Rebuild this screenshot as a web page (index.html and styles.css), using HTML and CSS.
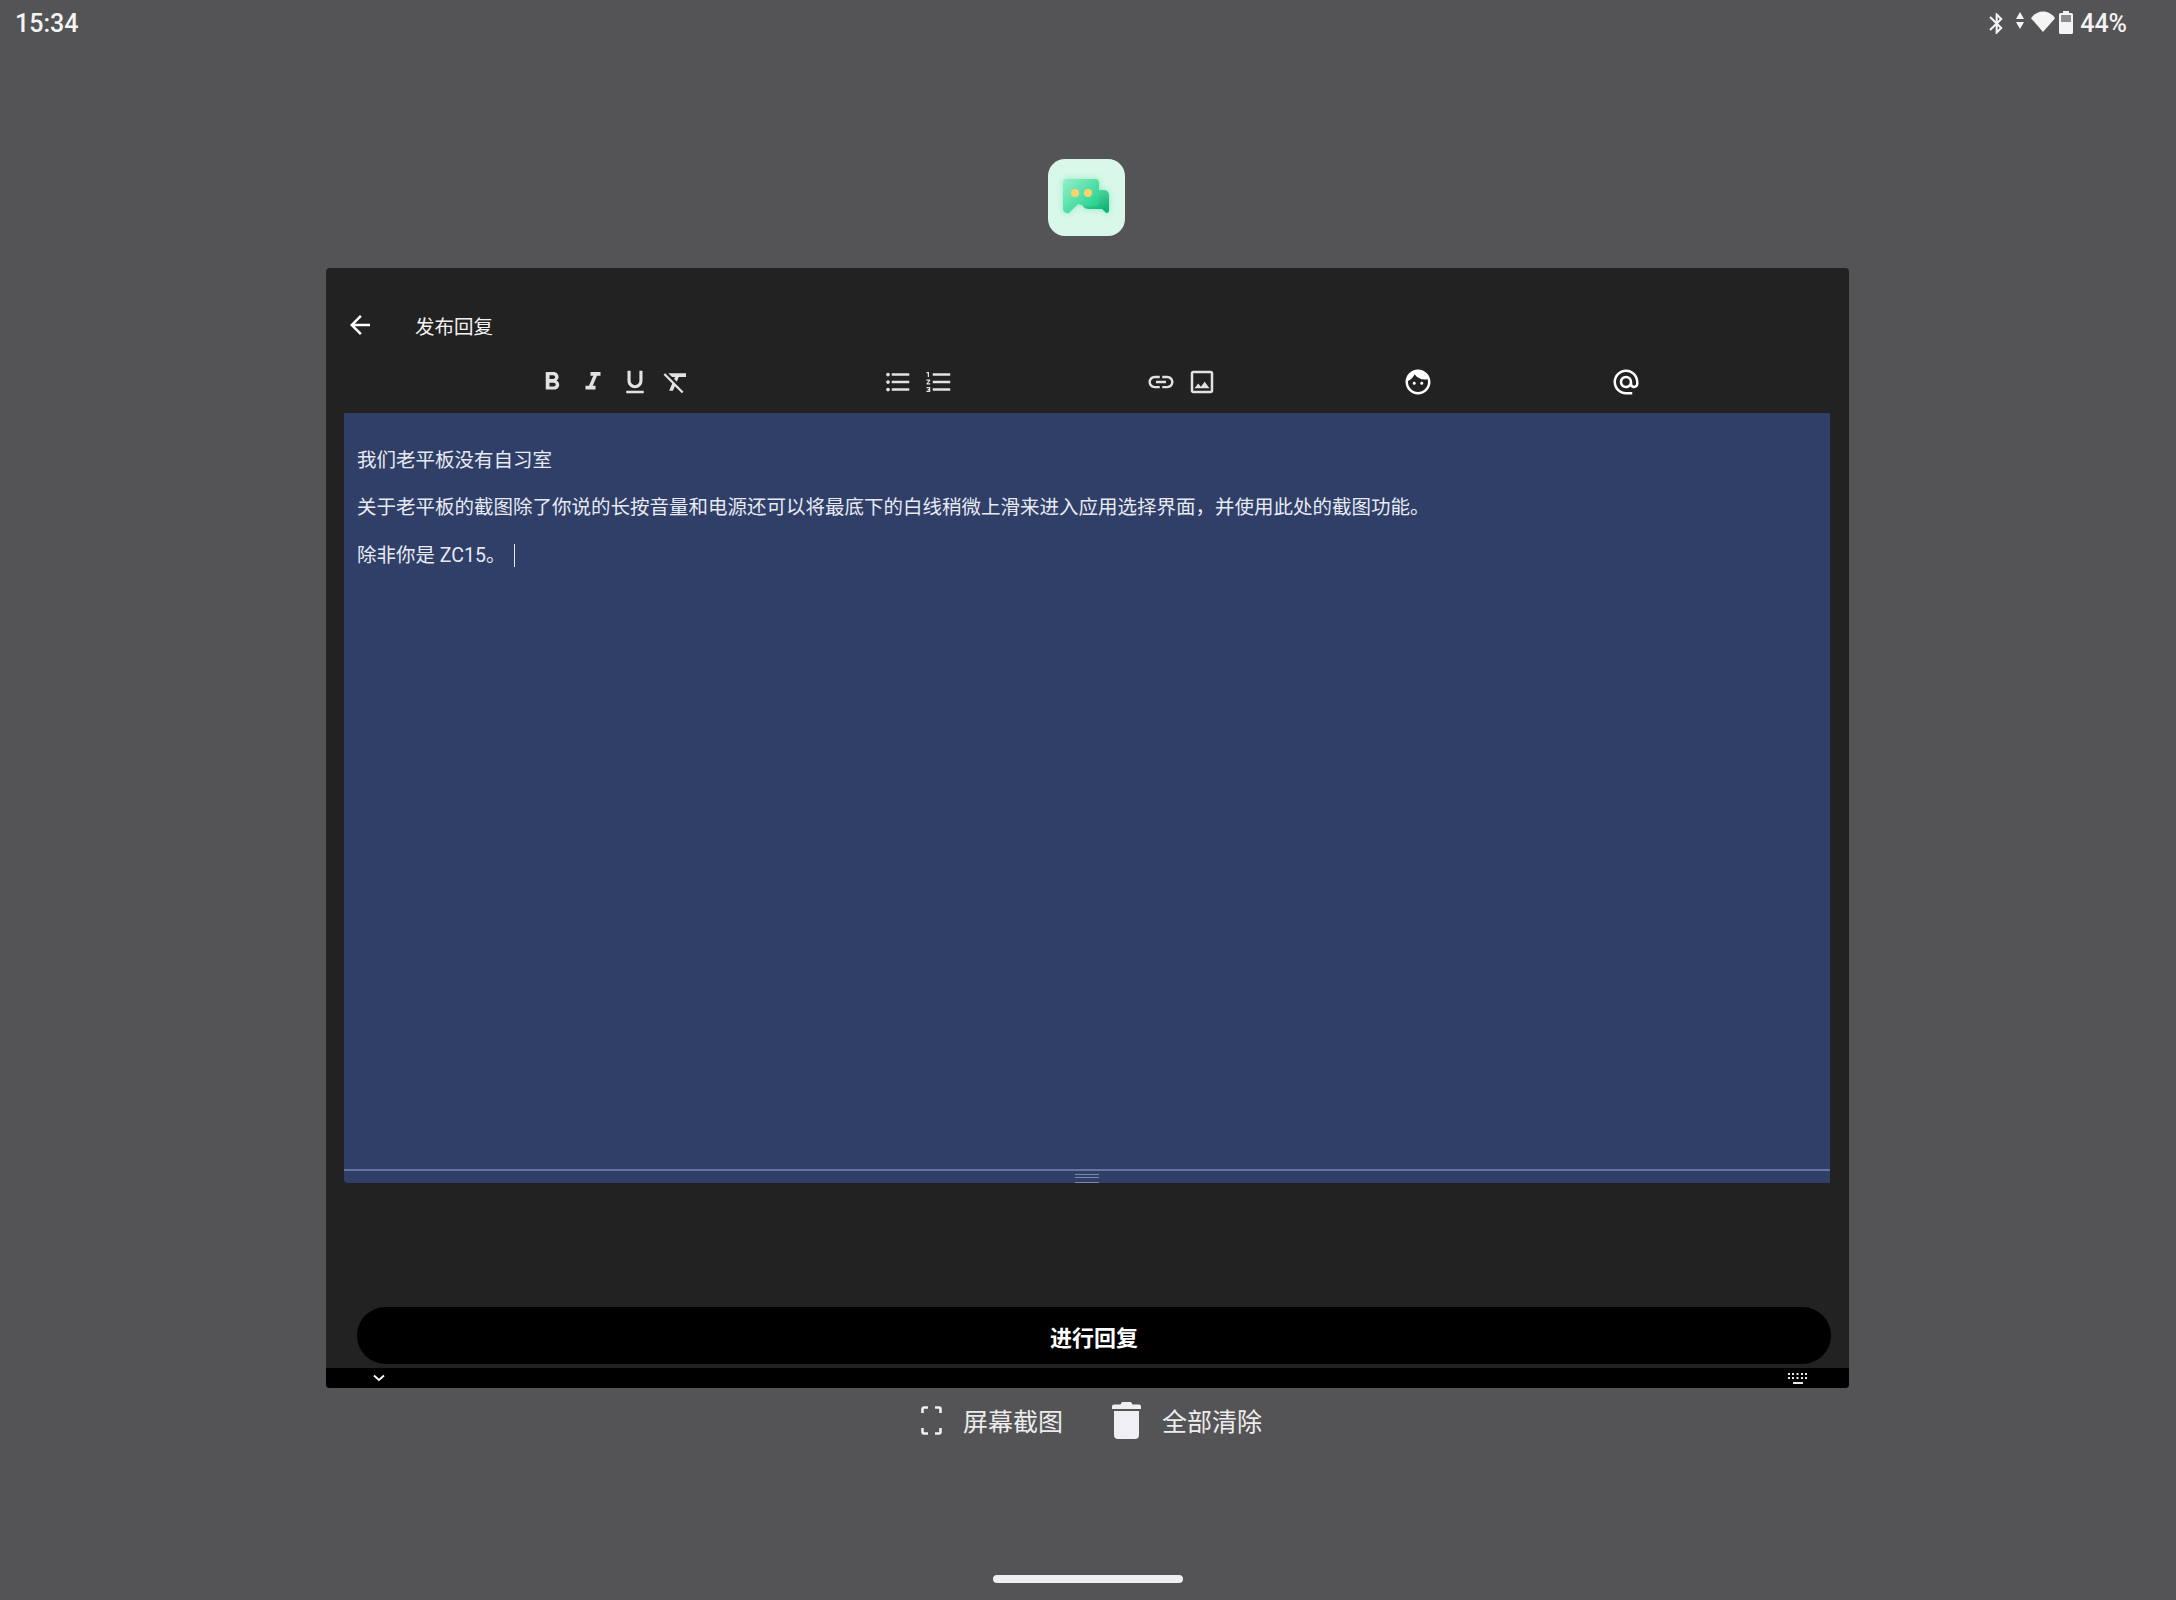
FILE: index.html
```html
<!DOCTYPE html>
<html lang="zh">
<head>
<meta charset="utf-8">
<title>发布回复</title>
<link rel="stylesheet" href="styles.css">
</head>
<body>
<div class="statusbar">
  <span class="time">15:34</span>
  <div class="status-right">
    <svg class="st-bt" viewBox="5 2 12.7 20"><path d="M17.71 7.71L12 2h-1v7.59L6.41 5 5 6.41 10.59 12 5 17.59 6.41 19 11 14.41V22h1l5.71-5.71-4.3-4.29 4.3-4.29zM13 5.83l1.88 1.88L13 9.59V5.83zm1.88 10.46L13 18.17v-3.76l1.88 1.88z"/></svg>
    <svg class="st-data" viewBox="0 0 8 17"><path d="M4 0l4 7H0z"/><path d="M0 10h8l-4 7z"/></svg>
    <svg class="st-wifi" viewBox="0 0 24 21"><path d="M0 7.2C3 3 7.2 0.6 12 0.6s9 2.4 12 6.6L12 21z"/></svg>
    <svg class="st-batt" viewBox="0 0 14 23"><path d="M4 0h6v2h2.5A1.5 1.5 0 0 1 14 3.500V21.500a1.500 1.500 0 0 1-1.500 1.500h-11A1.500 1.500 0 0 1 0 21.500V3.500A1.500 1.500 0 0 1 1.500 2H4z"/><rect class="batt-empty" x="2" y="4" width="10" height="7"/></svg>
    <span class="battery-pct">44%</span>
  </div>
</div>

<div class="app-icon">
  <svg viewBox="0 0 77 77" width="77" height="77">
    <defs>
      <linearGradient id="front" x1="0" y1="0" x2="1" y2="1"><stop offset="0" stop-color="#96efc9"/><stop offset="1" stop-color="#13cf87"/></linearGradient>
      <linearGradient id="back" x1="0" y1="0" x2="0.6" y2="1"><stop offset="0" stop-color="#6fdfb0"/><stop offset="1" stop-color="#0fb574"/></linearGradient>
    </defs>
    <path fill="url(#back)" d="M36 31h20a5 5 0 0 1 5 5v16a2 2 0 0 1-3.400 1.400L54 50H40a6 6 0 0 1-6-6z"/>
    <path fill="url(#front)" d="M19 20h28a4 4 0 0 1 4 4v19a4 4 0 0 1-4 4H37l-7-2-8 8a2.500 2.500 0 0 1-3 1q-4-1-4-4V24a4 4 0 0 1 4-4z"/>
    <circle cx="27" cy="34" r="4" fill="#fdd36b"/>
    <circle cx="40" cy="34" r="4" fill="#fdd36b"/>
  </svg>
</div>

<div class="window">
  <div class="titlebar">
    <svg class="icon" viewBox="0 0 24 24"><path d="M20 11H7.830l5.590-5.590L12 4l-8 8 8 8 1.410-1.410L7.830 13H20v-2z"/></svg>
    <span class="title">发布回复</span>
  </div>

  <div class="toolbar">
    <div class="tool-group">
      <span class="tool dim"><svg class="icon" viewBox="0 0 24 24"><path d="M15.600 10.790c.97-.67 1.650-1.770 1.650-2.790 0-2.260-1.750-4-4-4H7v14h7.040c2.090 0 3.710-1.700 3.710-3.790 0-1.520-.86-2.820-2.150-3.420zM10 6.500h3c.83 0 1.500.67 1.500 1.500s-.67 1.500-1.500 1.500h-3v-3zm3.500 9H10v-3h3.500c.83 0 1.500.67 1.500 1.500s-.67 1.500-1.500 1.500z"/></svg></span>
      <span class="tool dim"><svg class="icon" viewBox="0 0 24 24"><path d="M10 4v3h2.210l-3.420 8H6v3h8v-3h-2.210l3.420-8H18V4z"/></svg></span>
      <span class="tool dim"><svg class="icon" viewBox="0 0 24 24"><path d="M12 17c3.310 0 6-2.690 6-6V3h-2.500v8c0 1.930-1.570 3.500-3.500 3.500S8.500 12.930 8.500 11V3H6v8c0 3.310 2.690 6 6 6zm-7 2v2h14v-2H5z"/></svg></span>
      <span class="tool dim"><svg class="icon" viewBox="0 0 24 24"><path d="M3.270 5L2 6.270l6.970 6.970L6.500 19h3l1.570-3.660L16.730 21 18 19.730 3.550 5.270 3.270 5zM6 5v.18L8.820 8h2.400l-.72 1.680 2.100 2.100L14.210 8H20V5H6z"/></svg></span>
    </div>
    <div class="tool-group">
      <span class="tool dim"><svg class="icon" viewBox="0 0 24 24"><path d="M4 10.500c-.83 0-1.500.67-1.500 1.500s.67 1.500 1.500 1.500 1.500-.67 1.500-1.500-.67-1.500-1.500-1.500zm0-6c-.83 0-1.500.67-1.500 1.500S3.170 7.500 4 7.500 5.500 6.830 5.500 6 4.830 4.500 4 4.500zm0 12c-.83 0-1.500.68-1.500 1.500s.68 1.500 1.500 1.500 1.500-.68 1.500-1.500-.67-1.500-1.500-1.500zM7 19h14v-2H7v2zm0-6h14v-2H7v2zm0-8v2h14V5H7z"/></svg></span>
      <span class="tool dim"><svg class="icon" viewBox="0 0 24 24"><path d="M2 17h2v.5H3v1h1v.5H2v1h3v-4H2v1zm1-9h1V4H2v1h1v3zm-1 3h1.800L2 13.100v.9h3v-1H3.200L5 10.900V10H2v1zm5-6v2h14V5H7zm0 14h14v-2H7v2zm0-6h14v-2H7v2z"/></svg></span>
    </div>
    <div class="tool-group">
      <span class="tool dim"><svg class="icon" viewBox="0 0 24 24"><path d="M3.900 12c0-1.710 1.390-3.100 3.100-3.100h4V7H7c-2.760 0-5 2.240-5 5s2.240 5 5 5h4v-1.900H7c-1.710 0-3.100-1.390-3.100-3.100zM8 13h8v-2H8v2zm9-6h-4v1.900h4c1.710 0 3.100 1.390 3.100 3.100s-1.390 3.100-3.100 3.100h-4V17h4c2.760 0 5-2.240 5-5s-2.240-5-5-5z"/></svg></span>
      <span class="tool dim"><svg class="icon" viewBox="0 0 24 24"><path d="M19 5v14H5V5h14m0-2H5c-1.100 0-2 .9-2 2v14c0 1.100.9 2 2 2h14c1.100 0 2-.9 2-2V5c0-1.100-.9-2-2-2zm-4.860 8.860l-3 3.870L9 13.140 6 17h12l-3.860-5.140z"/></svg></span>
    </div>
    <div class="tool-group group-emoji">
      <span class="tool"><svg class="icon" viewBox="0 0 24 24"><path d="M9 11.750c-.69 0-1.250.56-1.250 1.250s.56 1.250 1.250 1.250 1.250-.56 1.250-1.250-.56-1.250-1.250-1.250zm6 0c-.69 0-1.250.56-1.250 1.250s.56 1.250 1.250 1.250 1.250-.56 1.250-1.250-.56-1.250-1.250-1.250zM12 2C6.480 2 2 6.480 2 12s4.480 10 10 10 10-4.480 10-10S17.520 2 12 2zm0 18c-4.410 0-8-3.590-8-8 0-.29.02-.58.05-.86 2.360-1.050 4.230-2.980 5.210-5.370C11.070 8.330 14.050 10 17.420 10c.78 0 1.530-.09 2.250-.26.21.71.33 1.470.33 2.260 0 4.410-3.590 8-8 8z"/></svg></span>
    </div>
    <div class="tool-group group-at">
      <span class="tool"><svg class="icon" viewBox="0 0 24 24"><path d="M12 2C6.480 2 2 6.480 2 12s4.480 10 10 10h5v-2h-5c-4.340 0-8-3.660-8-8s3.660-8 8-8 8 3.660 8 8v1.430c0 .79-.71 1.570-1.500 1.570s-1.500-.78-1.500-1.570V12c0-2.760-2.240-5-5-5s-5 2.240-5 5 2.240 5 5 5c1.380 0 2.640-.56 3.540-1.470.65.89 1.770 1.470 2.960 1.470 1.970 0 3.500-1.600 3.500-3.570V12c0-5.520-4.480-10-10-10zm0 13c-1.660 0-3-1.340-3-3s1.340-3 3-3 3 1.340 3 3-1.340 3-3 3z"/></svg></span>
    </div>
  </div>

  <div class="editor">
    <div class="editor-text">
      <p>我们老平板没有自习室</p>
      <p>关于老平板的截图除了你说的长按音量和电源还可以将最底下的白线稍微上滑来进入应用选择界面，并使用此处的截图功能。</p>
      <p>除非你是 ZC15。<span class="caret"></span></p>
    </div>
    <div class="resize-strip"><span class="resize-handle"></span></div>
  </div>

  <div class="submit">进行回复</div>

  <div class="ime-bar">
    <svg class="ime-down" viewBox="0 0 12 8"><path d="M1 1.500l5 4.500 5-4.500" fill="none" stroke="#fff" stroke-width="1.800"/></svg>
    <svg class="ime-kbd" viewBox="0 0 19 11"><g fill="#e8e8e8"><rect x="0" y="0" width="2" height="2"/><rect x="4" y="0" width="2" height="2"/><rect x="8.500" y="0" width="2" height="2"/><rect x="13" y="0" width="2" height="2"/><rect x="17" y="0" width="2" height="2"/><rect x="0" y="4" width="2" height="2"/><rect x="4" y="4" width="2" height="2"/><rect x="8.500" y="4" width="2" height="2"/><rect x="13" y="4" width="2" height="2"/><rect x="17" y="4" width="2" height="2"/><rect x="5" y="9" width="10" height="2"/></g></svg>
  </div>
</div>

<div class="actions">
  <div class="action">
    <svg class="action-shot" viewBox="0 0 21 29"><path d="M1.500 7V3a1.500 1.500 0 0 1 1.500-1.500h4M14 1.500h4A1.500 1.500 0 0 1 19.500 3v4M1.500 22v4A1.500 1.500 0 0 0 3 27.500h4M14 27.500h4a1.500 1.500 0 0 0 1.500-1.500v-4" fill="none" stroke="#f0f0f4" stroke-width="2.600"/></svg>
    <span>屏幕截图</span>
  </div>
  <div class="action action-clear">
    <svg class="action-trash" viewBox="0 0 29 37"><path d="M10 0h9l1.500 2.500H27a2 2 0 0 1 2 2V7H0V4.500a2 2 0 0 1 2-2h6.500z"/><path d="M2 9h25v24a4 4 0 0 1-4 4H6a4 4 0 0 1-4-4z"/></svg>
    <span>全部清除</span>
  </div>
</div>

<div class="home-pill"></div>
</body>
</html>
```

FILE: styles.css
```css
/* tablet screen, dimmed */
body
{ margin: 0;
width: 2176px;
height: 1600px;
overflow: hidden;
display: flex;
flex-direction: column;
background-color: #545456;
color: #fff;
font-family: Roboto, "Noto Sans CJK SC", sans-serif;
}

svg
{ display: block;
fill: currentColor;
}

/* Status bar */

.statusbar
{ height: 46px;
padding: 0 49px 0 15px;
display: flex;
justify-content: space-between;
align-items: center;
color: #f4f4f4;
font-size: 25px;
}

.time
{ font-weight: 500;
}

.status-right
{ display: flex;
align-items: center;
}

.st-bt
{ width: 14px;
height: 21px;
}

.st-data
{ width: 8px;
height: 17px;
margin: -6px 0 0 13px;
}

.st-wifi
{ width: 24px;
height: 21px;
margin: -4px 0 0 7px;
}

.st-batt
{ width: 14px;
height: 23px;
margin: -2px 0 0 4px;
}

.batt-empty
{ fill: #8c8c8e;
}

.battery-pct
{ margin-left: 7px;
font-weight: 500;
}

/* App icon above the window */

.app-icon
{ width: 77px;
height: 77px;
margin: 113px 0 32px 1048px;
border-radius: 17px;
background-color: #d9f8e9;
}

.app-icon svg
{ filter: drop-shadow(0 0 3px #8fe9c4);
}

/* Floating window */

.window
{ width: 1523px;
height: 1120px;
margin-left: 326px;
border-radius: 4px;
display: flex;
flex-direction: column;
background-color: #222222;
overflow: hidden;
}

.icon
{ width: 30px;
height: 30px;
}

.titlebar
{ height: 60px;
margin-top: 27px;
padding-left: 19px;
display: flex;
align-items: center;
gap: 40px;
}

.title
{ font-size: 19.5px;
color: #f2f2f2;
}

.toolbar
{ height: 42px;
margin: 6px 0 10px;
padding-left: 205px;
display: flex;
gap: 180px;
}

.tool-group
{ display: flex;
}

.group-emoji
{ margin-left: -6px;
}

.group-at
{ margin-left: -13px;
}

.tool
{ width: 41.5px;
height: 42px;
display: flex;
align-items: center;
justify-content: center;
}

.dim
{ color: #e2e2e2;
}

/* Editor */

.editor
{ height: 770px;
margin: 0 19px 0 18px;
display: flex;
flex-direction: column;
background-color: #2f3f68;
border-radius: 0 0 0 4px;
}

.editor-text
{ flex: 1;
padding: 20px 13px 0;
font-size: 19.5px;
line-height: 28px;
color: #e8eaf2;
}

.editor-text p
{ margin: 14px 0 19.3px;
margin-top: 0;
}

.editor-text p:first-child
{ margin-top: 14px;
}

.caret
{ display: inline-block;
width: 1px;
height: 23px;
margin-left: 9px;
vertical-align: -5px;
background-color: #e8eaf2;
}

.resize-strip
{ height: 14px;
border-top: 2px solid #66759a;
display: flex;
justify-content: center;
padding-top: 3px;
box-sizing: border-box;
}

.resize-handle
{ width: 24px;
height: 7px;
border-top: 1px solid #7d8aa9;
border-bottom: 1px solid #7d8aa9;
background: linear-gradient(#2f3f68 2px, #7d8aa9 2px, #7d8aa9 3px, #2f3f68 3px);
}

/* Bottom of window */

.submit
{ height: 57px;
margin: 124px 18px 0 31px;
border-radius: 29px;
display: flex;
align-items: center;
justify-content: center;
background-color: #000;
font-size: 22px;
font-weight: 700;
}

.ime-bar
{ height: 20px;
margin-top: 4px;
padding: 0 42px 0 47px;
display: flex;
justify-content: space-between;
align-items: center;
background-color: #000;
}

.ime-down
{ width: 12px;
height: 8px;
}

.ime-kbd
{ width: 19px;
height: 11px;
}

/* Actions under the window */

.actions
{ height: 64px;
margin-left: 921px;
display: flex;
align-items: center;
font-size: 25px;
color: #ececec;
}

.action
{ display: flex;
align-items: center;
}

.action-clear
{ margin-left: 49px;
}

.action-shot
{ width: 21px;
height: 29px;
margin-right: 21px;
}

.action-trash
{ width: 29px;
height: 37px;
margin-right: 21px;
color: #f0f0f4;
}

.home-pill
{ width: 190px;
height: 8px;
margin: 123px 0 0 993px;
border-radius: 4px;
background-color: #f0f0f0;
}
```
